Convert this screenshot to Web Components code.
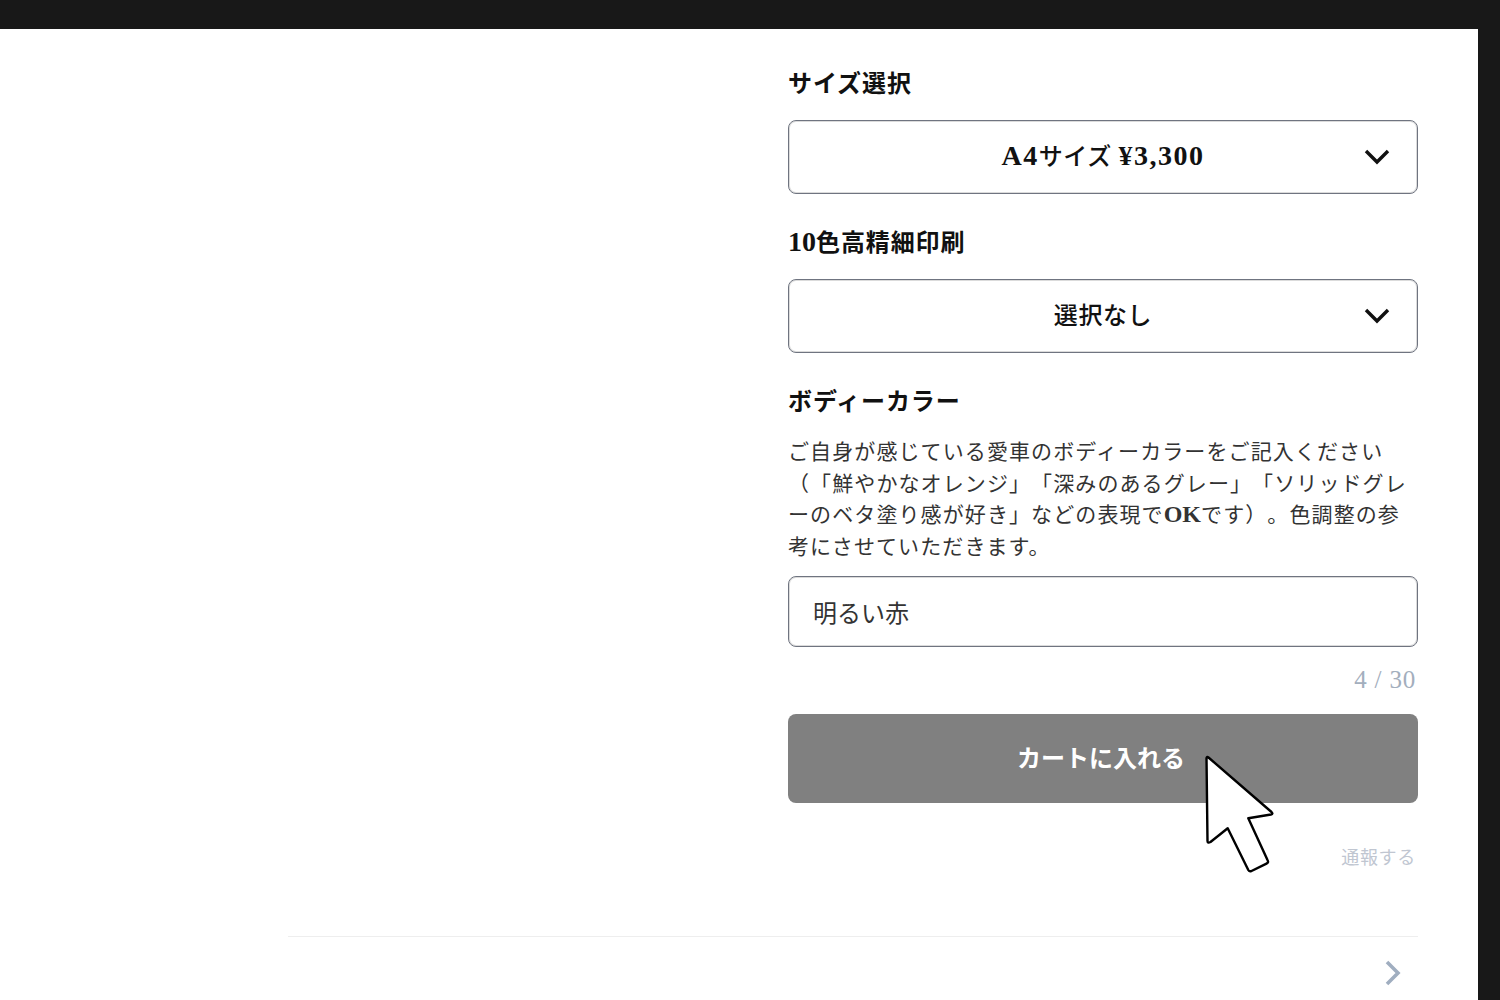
<!DOCTYPE html>
<html lang="ja">
<head>
<meta charset="utf-8">
<title>カートに入れる</title>
<style>
    html, body { margin: 0; height: 100%; overflow: hidden; background: #fff; }
    body { font-family: "Liberation Serif", "Noto Sans CJK JP", serif; color: #111; }
    .num { font-size: 28px; font-weight: bold; letter-spacing: 1.5px; line-height: 1; }
    .help-num { font-size: 24px; font-weight: bold; letter-spacing: 0; line-height: 1; }
</style>
</head>
<body>
<app-shell>
    <order-form>
        <field-label>サイズ選択</field-label>
        <select-box><span class="num">A4</span>サイズ <span class="num">¥3,300</span></select-box>
        <field-label style="margin-top:30px"><span class="num" style="letter-spacing:0">10</span>色高精細印刷</field-label>
        <select-box>選択なし</select-box>
        <field-label style="margin-top:30px">ボディーカラー</field-label>
        <help-text>ご自身が感じている愛車のボディーカラーをご記入ください<br>（「鮮やかなオレンジ」「深みのあるグレー」「ソリッドグレ<br>ーのベタ塗り感が好き」などの表現で<span class="help-num">OK</span>です）。色調整の参<br>考にさせていただきます。</help-text>
        <text-field value="明るい赤" max="30"></text-field>
        <cart-button>カートに入れる</cart-button>
        <report-link>通報する</report-link>
    </order-form>
    <next-row></next-row>
</app-shell>
<mouse-pointer></mouse-pointer>

<script>
class AppShell extends HTMLElement{
    constructor(){
        super();
        this.attachShadow({mode : 'open'});
    }

    connectedCallback(){
        this.shadowRoot.innerHTML = `
        <style>
        :host {
            display: block;
            box-sizing: border-box;
            height: 1000px;
            border-top: 29px solid #181818;
            border-right: 22px solid #181818;
            padding: 36px 60px 0 288px;
            background: #fff;
            overflow: hidden;
        }
        </style>
        <slot></slot>
        `;
    }
}

class OrderForm extends HTMLElement{
    constructor(){
        super();
        this.attachShadow({mode : 'open'});
    }

    connectedCallback(){
        this.shadowRoot.innerHTML = `
        <style>
        :host {
            display: flex;
            flex-direction: column;
            margin-left: 500px;
            width: 630px;
        }
        </style>
        <slot></slot>
        `;
    }
}

class FieldLabel extends HTMLElement{
    constructor(){
        super();
        this.attachShadow({mode : 'open'});
    }

    connectedCallback(){
        this.shadowRoot.innerHTML = `
        <style>
        :host {
            display: block;
            box-sizing: border-box;
            height: 36px;
            padding-top: 1px;
            font-size: 24px;
            font-weight: bold;
            line-height: 36px;
            letter-spacing: 0.9px;
            margin-bottom: 19px;
            color: #111;
        }
        </style>
        <slot></slot>
        `;
    }
}

class SelectBox extends HTMLElement{
    constructor(){
        super();
        this.attachShadow({mode : 'open'});
    }

    connectedCallback(){
        this.shadowRoot.innerHTML = `
        <style>
        :host {
            display: block;
            position: relative;
            box-sizing: border-box;
            height: 74px;
            border: 1px solid #6f7480;
            box-shadow: inset 0 0 0 1px rgba(0,0,0,.14);
            border-radius: 8px;
            font-size: 24px;
            font-weight: 500;
            line-height: 73px;
            letter-spacing: 0.6px;
            text-align: center;
            color: #111;
        }
        svg {
            position: absolute;
            right: 26px;
            top: 50%;
            margin-top: -9px;
        }
        </style>
        <slot></slot>
        <svg width="28" height="18" viewBox="0 0 28 18" fill="none" stroke="#111" stroke-width="3.4">
            <path d="M3 3l11 11L25 3"/>
        </svg>
        `;
    }
}

class HelpText extends HTMLElement{
    constructor(){
        super();
        this.attachShadow({mode : 'open'});
    }

    connectedCallback(){
        this.shadowRoot.innerHTML = `
        <style>
        :host {
            display: block;
            font-size: 21px;
            line-height: 31.5px;
            letter-spacing: 1.1px;
            text-spacing-trim: space-all;
            color: #333;
            margin: -1px 0 13px;
            white-space: nowrap;
        }
        </style>
        <slot></slot>
        `;
    }
}

class TextField extends HTMLElement{
    constructor(){
        super();
        this.attachShadow({mode : 'open'});
    }

    connectedCallback(){
        const value = this.getAttribute('value');
        const max = this.getAttribute('max');
        this.shadowRoot.innerHTML = `
        <style>
        :host {
            display: block;
        }
        .box {
            display: flex;
            align-items: center;
            box-sizing: border-box;
            height: 71px;
            padding: 0 24px;
            border: 1px solid #6f7480;
            box-shadow: inset 0 0 0 1px rgba(0,0,0,.14);
            border-radius: 8px;
            font-size: 24px;
            color: #333;
        }
        .count {
            text-align: right;
            font-size: 25px;
            line-height: 36px;
            margin: 15px 2px 16px 0;
            letter-spacing: 0.8px;
            color: #a3aebd;
        }
        </style>
        <div class="box">${value}</div>
        <div class="count">${value.length} / ${max}</div>
        `;
    }
}

class CartButton extends HTMLElement{
    constructor(){
        super();
        this.attachShadow({mode : 'open'});
    }

    connectedCallback(){
        this.shadowRoot.innerHTML = `
        <style>
        :host {
            display: flex;
            align-items: center;
            justify-content: center;
            box-sizing: border-box;
            height: 89px;
            padding: 0 4px 4px 0;
            border-radius: 8px;
            background: #808080;
            color: #fff;
            font-size: 24px;
            font-weight: bold;
        }
        </style>
        <slot></slot>
        `;
    }
}

class ReportLink extends HTMLElement{
    constructor(){
        super();
        this.attachShadow({mode : 'open'});
    }

    connectedCallback(){
        this.shadowRoot.innerHTML = `
        <style>
        :host {
            display: block;
            box-sizing: border-box;
            height: 28px;
            padding-top: 1px;
            margin: 40px 2px 0 0;
            text-align: right;
            font-size: 18px;
            line-height: 28px;
            letter-spacing: 0.7px;
            color: #c0c6d1;
        }
        </style>
        <slot></slot>
        `;
    }
}

class NextRow extends HTMLElement{
    constructor(){
        super();
        this.attachShadow({mode : 'open'});
    }

    connectedCallback(){
        this.shadowRoot.innerHTML = `
        <style>
        :host {
            display: flex;
            justify-content: flex-end;
            margin-top: 65px;
            padding: 23px 15px 0 0;
            border-top: 1px solid #eeeeee;
        }
        </style>
        <svg width="20" height="26" viewBox="0 0 20 26" fill="none" stroke="#a0aec0" stroke-width="3.6">
            <path d="M4 2l11 11L4 24"/>
        </svg>
        `;
    }
}

class MousePointer extends HTMLElement{
    constructor(){
        super();
        this.attachShadow({mode : 'open'});
    }

    connectedCallback(){
        this.shadowRoot.innerHTML = `
        <style>
        :host {
            position: absolute;
            left: 1200px;
            top: 750px;
            width: 80px;
            height: 130px;
        }
        </style>
        <svg width="80" height="130" viewBox="0 0 80 130" fill="#fff" stroke="#000" stroke-width="2.4" stroke-linejoin="round">
            <path d="M8.5 7.5L71.5 62Q73.5 64 71 64.5L48.3 68.3 67.5 110Q69 112.5 66.500 113.600L51.500 121Q49.500 122 48.300 120L27.700 78.300 10.500 92Q7.500 93.500 7.500 91L6.500 8Q7 6 8.500 7.500Z"/>
        </svg>
        `;
    }
}

customElements.define('app-shell', AppShell);
customElements.define('order-form', OrderForm);
customElements.define('field-label', FieldLabel);
customElements.define('select-box', SelectBox);
customElements.define('help-text', HelpText);
customElements.define('text-field', TextField);
customElements.define('cart-button', CartButton);
customElements.define('report-link', ReportLink);
customElements.define('next-row', NextRow);
customElements.define('mouse-pointer', MousePointer);
</script>
</body>
</html>
